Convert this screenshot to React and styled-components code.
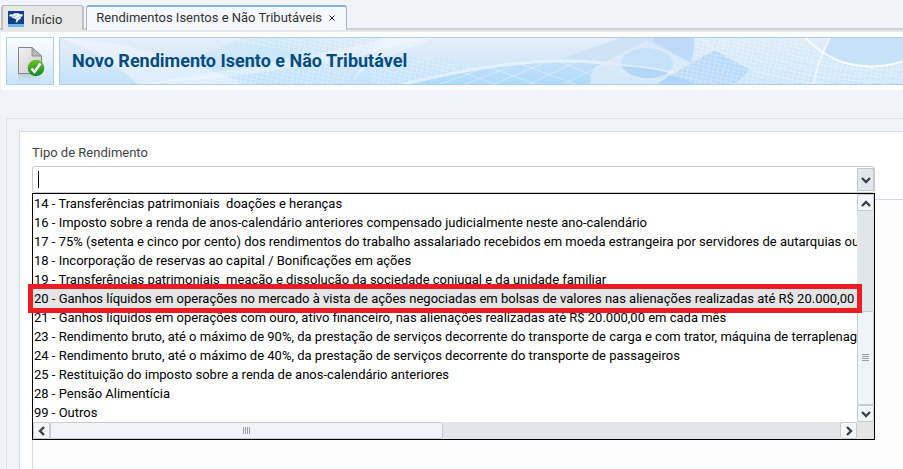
import React, { useState } from "react";
import styled, { createGlobalStyle } from "styled-components";

const GlobalStyle = createGlobalStyle`
  * {
    box-sizing: border-box;
  }

  body {
    margin: 0;
    background: #f0f3f9;
    color: #333;
    font-family: Roboto, "Liberation Sans", sans-serif;
    font-size: 13px;
    overflow: hidden;
  }

  button,
  input {
    font: inherit;
    color: inherit;
  }
`;

const StyledPage = styled.div`
  min-height: 100vh;
  display: flex;
  flex-direction: column;
`;

const StyledTabs = styled.nav`
  display: flex;
  align-items: stretch;
  gap: 2px;
  height: 32px;
  padding: 5px 1px 0;
  background: linear-gradient(#cfd0d2, #cfd0d2) 0 28px / 100% 2px no-repeat;
  border-bottom: 2px solid #e6e7e9;
`;

const StyledTab = styled.div`
  display: flex;
  align-items: center;
  gap: ${({ $active }) => ($active ? "4px" : "0")};
  padding: ${({ $active }) => ($active ? "0 8px 2px 9px" : "2px 20px 0 5px")};
  border: ${({ $active }) => ($active ? "1px solid #a9b4c0" : "2px solid #bdbfc1")};
  border-top: ${({ $active }) => ($active ? "2px solid #7fb2dc" : "1px solid #b5b7b9")};
  border-bottom: 0;
  border-radius: 3px 3px 0 0;
  background: ${({ $active }) => ($active ? "#f5f8fd" : "#e7e7e7")};
`;

const StyledTabButton = styled.button`
  display: flex;
  align-items: center;
  gap: 7px;
  padding: 0;
  border: 0;
  background: none;
  white-space: nowrap;
`;

const StyledTabClose = styled.button`
  display: flex;
  padding: 3px;
  border: 0;
  background: none;
`;

const StyledHeader = styled.header`
  display: flex;
  gap: 5px;
  margin-left: 1px;
  padding: 5px 0 5px 5px;
  background: #fff;
`;

const StyledSaveButton = styled.button`
  flex: none;
  width: 48px;
  height: 48px;
  padding: 0;
  border: 1px solid #aed0f0;
  background: linear-gradient(#fbfdff, #e5f1fc 50%, #c9e3fa);
`;

const StyledBanner = styled.div`
  position: relative;
  flex: 1;
  display: flex;
  align-items: center;
  height: 48px;
  padding-left: 12px;
  border: 1px solid #aed0f0;
  border-right: 0;
  overflow: hidden;

  > svg {
    position: absolute;
    top: 0;
    left: 0;
  }
`;

const StyledTitle = styled.h1`
  position: relative;
  margin: 0;
  color: #034d80;
  font-size: 18px;
  line-height: 20px;
  font-weight: 700;
`;

const StyledOuterPanel = styled.main`
  flex: 1;
  display: flex;
  margin: 28px 0 0 6px;
  padding: 12px 0 0 12px;
  border: 1px solid #e2e4e7;
  border-width: 1px 0 0 1px;
`;

const StyledForm = styled.form`
  flex: 1;
  display: flex;
  flex-direction: column;
  min-width: 0;
  padding: 13px 0 0 12px;
  border: 1px solid #d3dde8;
  border-width: 1px 0 0 1px;
  background: #fff;
`;

const StyledLabel = styled.label`
  line-height: 16px;
  color: #444;
`;

const StyledCombo = styled.div`
  position: relative;
  display: flex;
  height: 27px;
  margin: 5px 28px 0 0;
  border: 1px solid #c9cbce;
  border-radius: 3px;
  background: #fff;
`;

const StyledCaret = styled.span`
  width: 1px;
  margin: 4px 0 4px 5px;
  background: #000;
`;

const StyledInput = styled.input`
  flex: 1;
  min-width: 0;
  padding: 0 1px;
  border: 0;
  outline: 0;
  background: none;
  color: #000;
`;

const StyledComboButton = styled.button`
  display: flex;
  align-items: center;
  justify-content: center;
  width: 17px;
  margin: 1px 0;
  padding: 0;
  border: 1px solid #c6c8cb;
  background: #e3e6ec;
`;

const StyledDetails = styled.section`
  flex: 1;
  min-height: 240px;
  margin-top: 6px;
  border: 1px solid #d3dde8;
  border-width: 1px 0 0 1px;
  background: #fdfdfd;
`;

const StyledPopup = styled.div`
  position: absolute;
  z-index: 1;
  top: 26px;
  left: -1px;
  right: -1px;
  display: grid;
  grid-template-columns: minmax(0, 1fr) 17px;
  grid-template-rows: auto 17px;
  border: 1px solid #000;
  background: #e5e5e5;
`;

const StyledOptions = styled.ul`
  margin: 0;
  padding: 0;
  list-style: none;
  background: #fff;
`;

const StyledOption = styled.li`
  position: relative;
  color: #000;
  line-height: 19px;
  background: ${({ $marked }) => ($marked ? "#e5e5e5" : "transparent")};

  > span {
    display: block;
    padding-left: 1px;
    overflow: hidden;
    white-space: pre;
  }

  &::after {
    content: "";
    display: ${({ $marked }) => ($marked ? "block" : "none")};
    position: absolute;
    z-index: 2;
    inset: -5px;
    border: 5px solid #ed1c24;
    pointer-events: none;
  }
`;

const StyledScrollbar = styled.div`
  display: flex;
  flex-direction: ${({ $vertical }) => ($vertical ? "column" : "row")};
  background: #e2e5ea;
`;

const StyledScrollButton = styled.button`
  flex: none;
  display: flex;
  align-items: center;
  justify-content: center;
  width: 17px;
  height: 17px;
  padding: 0;
  border: 1px solid #c9cbcd;
  border-radius: 2px;
  background: #f3f6fb;
`;

const StyledTrack = styled.div`
  flex: ${({ $grow }) => $grow};
`;

const StyledThumb = styled.div`
  flex: ${({ $grow }) => $grow};
  display: flex;
  align-items: center;
  justify-content: center;
  border: 1px solid #c9cbcd;
  border-radius: 2px;
  background: #f0f3f9;
`;

const OPTIONS = [
  { code: 14, text: "Transferências patrimoniais  doações e heranças" },
  { code: 16, text: "Imposto sobre a renda de anos-calendário anteriores compensado judicialmente neste ano-calendário" },
  { code: 17, text: "75% (setenta e cinco por cento) dos rendimentos do trabalho assalariado recebidos em moeda estrangeira por servidores de autarquias ou rep" },
  { code: 18, text: "Incorporação de reservas ao capital / Bonificações em ações" },
  { code: 19, text: "Transferências patrimoniais  meação e dissolução da sociedade conjugal e da unidade familiar" },
  { code: 20, text: "Ganhos líquidos em operações no mercado à vista de ações negociadas em bolsas de valores nas alienações realizadas até R$ 20.000,00 em" },
  { code: 21, text: "Ganhos líquidos em operações com ouro, ativo financeiro, nas alienações realizadas até R$ 20.000,00 em cada mês" },
  { code: 23, text: "Rendimento bruto, até o máximo de 90%, da prestação de serviços decorrente do transporte de carga e com trator, máquina de terraplenagem," },
  { code: 24, text: "Rendimento bruto, até o máximo de 40%, da prestação de serviços decorrente do transporte de passageiros" },
  { code: 25, text: "Restituição do imposto sobre a renda de anos-calendário anteriores" },
  { code: 28, text: "Pensão Alimentícia" },
  { code: 99, text: "Outros" }
];

const ARROWS = {
  up: "M1 8 L5 4 L9 8",
  down: "M1 3 L5 7 L9 3",
  left: "M7 1 L3 5 L7 9",
  right: "M3 1 L7 5 L3 9"
};

const Arrow = ({ direction }) => (
  <svg width="10" height="10" viewBox="0 0 10 10" aria-hidden="true">
    <path d={ARROWS[direction]} fill="none" stroke="#3c4249" strokeWidth="2.4" />
  </svg>
);

const Grip = ({ vertical }) => (
  <svg width="8" height="8" viewBox="0 0 8 8" aria-hidden="true">
    <path
      d={vertical ? "M0 .5H7M0 2.5H7M0 4.5H7M0 6.5H7" : "M.5 0V7M2.5 0V7M4.5 0V7M6.5 0V7"}
      stroke="#9a9da1"
    />
  </svg>
);

const HomeIcon = () => (
  <svg width="16" height="16" viewBox="0 0 16 16" aria-hidden="true">
    <rect width="16" height="13" fill="#0b4289" />
    <rect y="13" width="16" height="3" fill="#6cb7e9" />
    <path
      d="M1 4 3 3 5 3.500 6.500 2 8 2.500 10 2 11.500 3 15 3.500 14.500 5 13 6 12.500 8 10.500 9 9 11.500 7.500 11 8.500 9 7 7.500 4.500 7 3.500 5.500 1.500 5.500Z"
      fill="#f3f7fa"
    />
    <path d="M4 5 7 5.500 8.500 4M8 8 10 6.500 12.500 5.500" fill="none" stroke="#8aa5c4" strokeWidth=".7" />
  </svg>
);

const DocumentIcon = () => (
  <svg width="46" height="46" viewBox="0 0 46 46" aria-hidden="true">
    <defs>
      <linearGradient id="paper" x1="0" y1="0" x2="1" y2="1">
        <stop offset="0" stopColor="#f2f2f2" />
        <stop offset="1" stopColor="#c9c9c9" />
      </linearGradient>
      <linearGradient id="check" x1="0" y1="0" x2="0" y2="1">
        <stop offset="0" stopColor="#70c22c" />
        <stop offset="1" stopColor="#068a1c" />
      </linearGradient>
      <linearGradient id="mirror" x1="0" y1="0" x2="0" y2="1">
        <stop offset="0" stopColor="#8fa5aa" stopOpacity=".4" />
        <stop offset="1" stopColor="#8fa5aa" stopOpacity="0" />
      </linearGradient>
    </defs>
    <path d="M11 36H25L29 39H34L33 43H11Z" fill="url(#mirror)" />
    <path d="M11.500 9.500H25L34.500 18V35.500H11.500Z" fill="url(#paper)" stroke="#858585" />
    <path d="M25 9.500V18H34.500Z" fill="#b9b9b9" stroke="#858585" strokeWidth=".8" />
    <circle cx="29" cy="30" r="8.300" fill="url(#check)" />
    <path d="M24.500 30.500 27.500 34 33.500 25.500" fill="none" stroke="#fff" strokeWidth="2.600" />
  </svg>
);

const CloseIcon = () => (
  <svg width="6" height="6" viewBox="0 0 6 6" aria-hidden="true">
    <path d="M.5.5 5.500 5.500M5.500.5.5 5.500" stroke="#222" />
  </svg>
);

const BannerArt = () => (
  <svg width="100%" height="46" viewBox="0 0 844 46" preserveAspectRatio="xMinYMid slice" aria-hidden="true">
    <defs>
      <linearGradient id="sky" x1="0" y1="0" x2="0" y2="1">
        <stop offset="0" stopColor="#e5eef8" />
        <stop offset="1" stopColor="#c6e2fb" />
      </linearGradient>
      <linearGradient id="wash" x1="0" y1="0" x2="1" y2="0">
        <stop offset="0" stopColor="#c4e4f9" stopOpacity="0" />
        <stop offset=".5" stopColor="#c0e4fa" stopOpacity=".6" />
        <stop offset="1" stopColor="#cfe5f8" stopOpacity=".2" />
      </linearGradient>
      <linearGradient id="globe" x1="0" y1="0" x2="0" y2="1">
        <stop offset="0" stopColor="#c4e0f9" />
        <stop offset="1" stopColor="#afdafb" />
      </linearGradient>
      <linearGradient id="facet" x1="1" y1="0" x2="0" y2="1">
        <stop offset="0" stopColor="#b5d9f9" />
        <stop offset="1" stopColor="#b9d9f9" stopOpacity=".8" />
      </linearGradient>
      <pattern id="mesh" width="5" height="4" patternUnits="userSpaceOnUse" patternTransform="rotate(12)">
        <path d="M0 .5H5M.5 0V4" stroke="#fff" strokeOpacity=".35" strokeWidth=".7" />
      </pattern>
      <clipPath id="dome">
        <path d="M350 46Q440 25 495 24Q590 24 642 46Z" />
      </clipPath>
    </defs>
    <rect width="844" height="46" fill="url(#sky)" />
    <path d="M180 0H355L310 46H80Z" fill="url(#wash)" />
    <path d="M0 0Q45 16 78 46H185Q92 4 0 0Z" fill="#f3f8fd" fillOpacity=".5" />
    <path d="M150 0H320L285 46H78Q190 36 240 14Z" fill="url(#mesh)" />
    <path d="M290 46 320 0H375L310 26Z" fill="#fff" fillOpacity=".3" />
    <path d="M78 46Q190 40 300 18Q350 4 370 0H330Q240 22 78 46Z" fill="#fff" fillOpacity=".3" />
    <path d="M310 24Q370 8 475 46H310Z" fill="#c5e7fc" fillOpacity=".4" />
    <path d="M310 24Q370 8 475 46H310Z" fill="url(#mesh)" />
    <path d="M492 24 560 0H635L632 25 610 46H530Z" fill="#cfe3f7" />
    <path d="M350 46Q440 25 495 24Q590 24 642 46Z" fill="url(#globe)" />
    <g clipPath="url(#dome)" fill="none" stroke="#e4f4ff" strokeOpacity=".6">
      <path d="M375 48 430 28M400 48 465 23M430 48 495 20M465 48 525 20M500 48 560 18M535 48 590 20" />
      <path d="M385 28 440 48M415 24 480 48M450 22 520 48M490 20 560 48M525 20 600 48M560 22 640 48" />
    </g>
    <path d="M345 46Q430 24 500 23Q590 24 646 46" fill="none" stroke="#eaf5fe" strokeOpacity=".7" strokeWidth="3" />
    <path d="M530 46Q530 30 541 26L587 3 632 26 598 46Z" fill="#dfecf8" fillOpacity=".75" />
    <ellipse cx="587" cy="25" rx="26" ry="15" fill="#c3e1f8" />
    <path d="M561 28Q590 29 609 35Q588 45 570 36Z" fill="#b2d7f9" />
    <path d="M595 0H634Q636 12 630 24L592 3Z" fill="#bddbf8" />
    <path d="M561 27Q610 30 650 46" fill="none" stroke="#fff" strokeOpacity=".4" strokeWidth="2" />
    <path d="M611 37 655 12 690 32 675 46H635Z" fill="url(#facet)" />
    <path d="M598 46 610 37 636 46Z" fill="#aed5fb" />
    <path d="M635 0H735Q770 28 844 25V46H675L690 32 655 12 632 24Z" fill="#d6eafa" fillOpacity=".5" />
    <path d="M611 37 655 12 632 24 635 0H735Q770 28 844 25V46H635Z" fill="url(#mesh)" />
    <path d="M769 0H844V24Q800 32 763 18Z" fill="#c9e1f8" />
    <path d="M754 46Q757 24 770 0" fill="none" stroke="#fff" strokeOpacity=".6" strokeWidth="2" />
    <g fill="none" stroke="#f3faff" strokeOpacity=".35">
      <path d="M700 0Q755 38 844 31M680 0Q742 46 844 37M660 0Q724 48 844 43M640 0Q690 42 770 46" />
    </g>
    <path d="M742 -4Q783 42 844 23" fill="none" stroke="#fff" strokeWidth="2" strokeOpacity=".8" />
  </svg>
);

const Scrollbar = ({ vertical, before, size, after }) => (
  <StyledScrollbar $vertical={vertical}>
    <StyledScrollButton type="button" aria-label={vertical ? "Rolar para cima" : "Rolar para a esquerda"}>
      <Arrow direction={vertical ? "up" : "left"} />
    </StyledScrollButton>
    <StyledTrack $grow={before} />
    <StyledThumb $grow={size}>
      <Grip vertical={vertical} />
    </StyledThumb>
    <StyledTrack $grow={after} />
    <StyledScrollButton type="button" aria-label={vertical ? "Rolar para baixo" : "Rolar para a direita"}>
      <Arrow direction={vertical ? "down" : "right"} />
    </StyledScrollButton>
  </StyledScrollbar>
);

const IncomeTypeCombo = () => {
  const [open, setOpen] = useState(true);
  const [value, setValue] = useState("");
  const [focused, setFocused] = useState(false);

  const choose = option => {
    setValue(`${option.code} - ${option.text}`);
    setOpen(false);
  };

  return (
    <StyledCombo>
      {/* stands in for the native caret until the field is used */}
      {!focused && !value && <StyledCaret />}
      <StyledInput
        id="tipo"
        role="combobox"
        aria-expanded={open}
        aria-controls="tipo-lista"
        autoComplete="off"
        value={value}
        onFocus={() => setFocused(true)}
        onBlur={() => setFocused(false)}
        onChange={e => setValue(e.target.value)}
      />
      <StyledComboButton type="button" aria-label="Abrir lista" onClick={() => setOpen(!open)}>
        <Arrow direction="down" />
      </StyledComboButton>
      {open && (
        <StyledPopup>
          <StyledOptions id="tipo-lista" role="listbox" aria-label="Tipo de Rendimento">
            {OPTIONS.map(option => (
              <StyledOption
                key={option.code}
                role="option"
                aria-selected={option.code === 20}
                $marked={option.code === 20}
                onClick={() => choose(option)}
              >
                <span>{`${option.code} - ${option.text}`}</span>
              </StyledOption>
            ))}
          </StyledOptions>
          <Scrollbar vertical before={101} size={93} after={0} />
          <Scrollbar before={0} size={392} after={398} />
        </StyledPopup>
      )}
    </StyledCombo>
  );
};

const App = () => (
  <StyledPage>
    <GlobalStyle />
    <StyledTabs>
      <StyledTab>
        <StyledTabButton type="button">
          <HomeIcon />
          Início
        </StyledTabButton>
      </StyledTab>
      <StyledTab $active>
        <StyledTabButton type="button">Rendimentos Isentos e Não Tributáveis</StyledTabButton>
        <StyledTabClose type="button" aria-label="Fechar">
          <CloseIcon />
        </StyledTabClose>
      </StyledTab>
    </StyledTabs>
    <StyledHeader>
      <StyledSaveButton type="button" aria-label="Confirmar">
        <DocumentIcon />
      </StyledSaveButton>
      <StyledBanner>
        <BannerArt />
        <StyledTitle>Novo Rendimento Isento e Não Tributável</StyledTitle>
      </StyledBanner>
    </StyledHeader>
    <StyledOuterPanel>
      <StyledForm>
        <StyledLabel htmlFor="tipo">Tipo de Rendimento</StyledLabel>
        <IncomeTypeCombo />
        <StyledDetails />
      </StyledForm>
    </StyledOuterPanel>
  </StyledPage>
);

export default App;
